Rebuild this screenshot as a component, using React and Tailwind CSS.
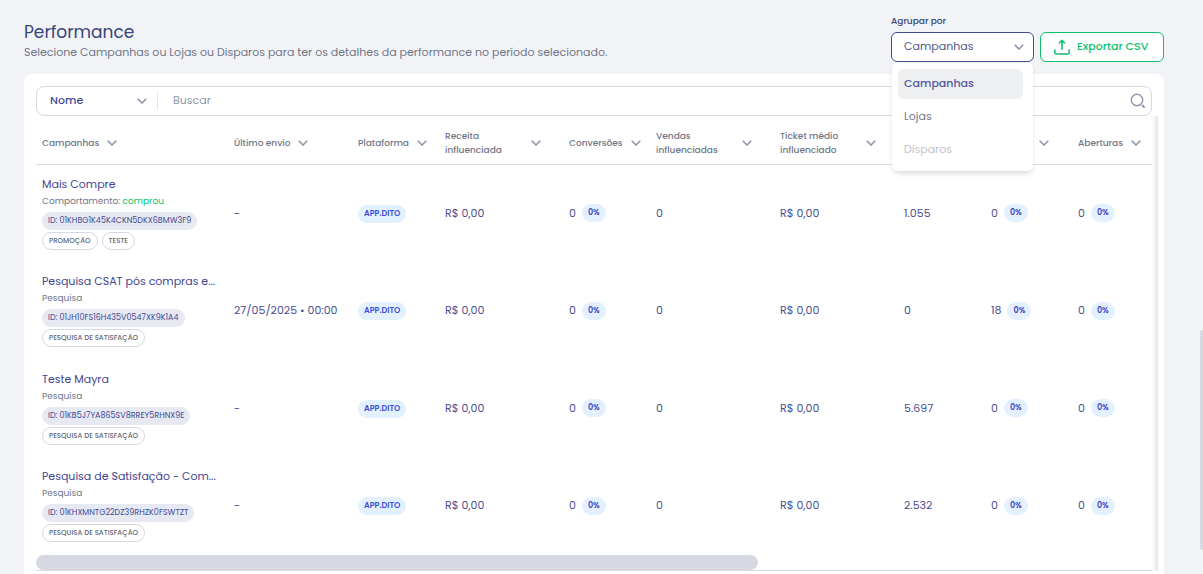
import { useState } from 'react';
import clsx from 'clsx';

const COLUMNS = [
  { key: 'campaign', label: 'Campanhas', width: 'w-[192px]' },
  { key: 'lastSent', label: 'Último envio', width: 'w-[124px]' },
  { key: 'platform', label: 'Plataforma', width: 'w-[87px]' },
  { key: 'revenue', label: 'Receita influenciada', width: 'w-[124px]', wrap: true },
  { key: 'conversions', label: 'Conversões', width: 'w-[87px]' },
  { key: 'sales', label: 'Vendas influenciadas', width: 'w-[124px]', wrap: true },
  { key: 'ticket', label: 'Ticket médio influenciado', width: 'w-[124px]', wrap: true },
  { key: 'sent', hint: 'Envios', width: 'w-[87px]' },
  { key: 'delivered', label: 'Entregas', width: 'w-[87px]' },
  { key: 'opens', label: 'Aberturas' },
];

const CAMPAIGNS = [
  {
    name: 'Mais Compre',
    type: 'Comportamento:',
    event: 'comprou',
    id: '01KHBG1K45K4CKN5DKX6BMW3F9',
    tags: ['PROMOÇÃO', 'TESTE'],
    lastSent: '-',
    sent: '1.055',
    delivered: '0',
  },
  {
    name: 'Pesquisa CSAT pós compras e...',
    type: 'Pesquisa',
    id: '01JH10FS16H435V0547XK9K1A4',
    tags: ['PESQUISA DE SATISFAÇÃO'],
    lastSent: '27/05/2025 • 00:00',
    sent: '0',
    delivered: '18',
  },
  {
    name: 'Teste Mayra',
    type: 'Pesquisa',
    id: '01KB5J7YA865SV8RREY5RHNX9E',
    tags: ['PESQUISA DE SATISFAÇÃO'],
    lastSent: '-',
    sent: '5.697',
    delivered: '0',
  },
  {
    name: 'Pesquisa de Satisfação - Com...',
    type: 'Pesquisa',
    id: '01KHXMNTG22DZ39RHZK0FSWTZT',
    tags: ['PESQUISA DE SATISFAÇÃO'],
    lastSent: '-',
    sent: '2.532',
    delivered: '0',
  },
];

const GROUPS = [
  { value: 'Campanhas' },
  { value: 'Lojas' },
  { value: 'Disparos', disabled: true },
];

function Chevron({ className }) {
  return (
    <svg
      viewBox="0 0 10 6"
      className={clsx('h-[6px] w-[10px] shrink-0 text-[#8e96a9]', className)}
      fill="none"
      stroke="currentColor"
      strokeWidth="1.6"
      aria-hidden="true"
    >
      <path d="M.7.7 5 5 9.3.7" />
    </svg>
  );
}

function UploadIcon() {
  return (
    <svg
      viewBox="0 0 16 16"
      className="size-4 shrink-0"
      fill="none"
      stroke="currentColor"
      strokeWidth="1.5"
      strokeLinecap="round"
      strokeLinejoin="round"
      aria-hidden="true"
    >
      <path d="M8 10.2V1.5M5.3 4 8 1.3 10.7 4" />
      <path d="M.8 11v2.6c0 .8.5 1.3 1.3 1.3h11.8c.8 0 1.3-.5 1.3-1.3V11" />
    </svg>
  );
}

function SearchIcon() {
  return (
    <svg
      viewBox="0 0 16 16"
      className="size-4"
      fill="none"
      stroke="currentColor"
      aria-hidden="true"
    >
      <circle cx="7" cy="7" r="5.7" strokeWidth="1.4" />
      <path d="m12 12 2.6 2.6" strokeWidth="2" />
    </svg>
  );
}

function Rate({ value, rate = '0%' }) {
  return (
    <span className="flex items-center gap-1.5">
      {value}
      <span className="rounded-full bg-[#e3f1ff] px-1.5 text-[8px] leading-[18px] font-semibold text-[#3d42c4]">
        {rate}
      </span>
    </span>
  );
}

function CampaignRow({ campaign }) {
  return (
    <tr className="odd:h-[98px] even:h-[97px] [&>td]:pl-1.5">
      <td className="pb-0.5">
        <div className="flex flex-col items-start whitespace-nowrap">
          <a href="#campanha" className="text-[11px] leading-[18px] text-[#3f4490]">
            {campaign.name}
          </a>
          <span className="text-[9px] leading-4 text-[#6f7787]">
            {campaign.type}
            {campaign.event && <span className="text-[#0fbf6b]"> {campaign.event}</span>}
          </span>
          <span className="mt-[3px] rounded-full bg-[#e6e9f1] px-1.5 text-[8px] leading-[18px] text-[#454a94]">
            ID: {campaign.id}
          </span>
          <div className="mt-0.5 flex gap-1">
            {campaign.tags.map((tag) => (
              <span
                key={tag}
                className="rounded-full border border-[#d6d9e2] px-1.5 text-[7px] leading-4 font-medium text-[#5f6779]"
              >
                {tag}
              </span>
            ))}
          </div>
        </div>
      </td>
      <td>{campaign.lastSent}</td>
      <td>
        <span className="inline-block rounded-full bg-[#e3f1ff] px-1.5 text-[8px] leading-[18px] font-semibold text-[#3d4fd6]">
          APP.DITO
        </span>
      </td>
      <td>R$ 0,00</td>
      <td>
        <Rate value="0" />
      </td>
      <td>0</td>
      <td>R$ 0,00</td>
      <td>{campaign.sent}</td>
      <td>
        <Rate value={campaign.delivered} />
      </td>
      <td>
        <Rate value="0" />
      </td>
    </tr>
  );
}

function GroupSelect() {
  const [group, setGroup] = useState('Campanhas');

  return (
    <div className="w-[143px]">
      <label htmlFor="group" className="block text-[9px] leading-[22px] font-medium text-[#3b4677]">
        Agrupar por
      </label>
      <div className="relative">
        <select
          id="group"
          value={group}
          onChange={(e) => setGroup(e.target.value)}
          className="block h-[30px] w-full appearance-none rounded-md border border-[#454a94] bg-white pb-0.5 pl-3 text-[11px] text-[#4f5a86] outline-none"
        >
          {GROUPS.map((g) => (
            <option key={g.value} disabled={g.disabled}>
              {g.value}
            </option>
          ))}
        </select>
        <Chevron className="pointer-events-none absolute top-3 right-2.5" />
        <ul className="absolute inset-x-px top-full z-10 mt-px rounded-md bg-white px-1.5 pt-1.5 pb-[3px] shadow-md">
          {GROUPS.map((g) => (
            <li key={g.value} className="mb-[3px] pr-1">
              <button
                type="button"
                disabled={g.disabled}
                onClick={() => setGroup(g.value)}
                className={clsx(
                  'h-[30px] w-full rounded-md px-1.5 pb-0.5 text-left text-[11px]',
                  g.value === group && 'bg-[#eeeff1] font-medium text-[#5358a3]',
                  g.value !== group && !g.disabled && 'text-[#6f7787]',
                  g.disabled && 'text-[#c0c4d0]'
                )}
              >
                {g.value}
              </button>
            </li>
          ))}
        </ul>
      </div>
    </div>
  );
}

function SearchBar() {
  return (
    <div className="flex h-[30px] items-center rounded-lg border border-[#d6d9e2] pr-[5px]">
      <div className="relative w-[121px] border-r border-[#e6e8ee]">
        <select
          aria-label="Campo da busca"
          className="block h-[18px] w-full appearance-none pb-0.5 pl-[13px] text-[11px] font-medium text-[#454a94] outline-none"
        >
          <option>Nome</option>
        </select>
        <Chevron className="pointer-events-none absolute top-1.5 right-2.5" />
      </div>
      <input
        type="search"
        aria-label="Buscar"
        placeholder="Buscar"
        className="min-w-0 flex-1 px-[15px] pb-0.5 text-[11px] outline-none placeholder:text-[#8e96a9]"
      />
      <button type="button" aria-label="Pesquisar" className="text-[#8e96a9]">
        <SearchIcon />
      </button>
    </div>
  );
}

export default function App() {
  return (
    <div className="flex min-h-screen flex-col bg-[#f2f3f7] pt-2.5 pr-[39px] pl-6 font-['Poppins','Inter',sans-serif]">
      <header className="flex items-end justify-between">
        <div>
          <h1 className="text-[17px] leading-5 text-[#36457a]">Performance</h1>
          <p className="text-[11px] leading-5 text-[#6f7787]">
            Selecione Campanhas ou Lojas ou Disparos para ter os detalhes da performance no período selecionado.
          </p>
        </div>
        <div className="flex items-end gap-1.5">
          <GroupSelect />
          <button
            type="button"
            className="flex h-[30px] w-[124px] items-center gap-[7px] rounded-md border border-[#0fbf6b] bg-white pl-[13px] text-[11px] font-medium whitespace-nowrap text-[#0fbf6b]"
          >
            <UploadIcon />
            <span className="pb-0.5">Exportar CSV</span>
          </button>
        </div>
      </header>

      <main className="mt-3 flex-1 rounded-t-lg bg-white px-3 pt-3">
        <SearchBar />
        <div className="-mr-1.5 flex">
          <div className="min-w-0 flex-1 border-b border-[#d6d9e2]">
            <table className="w-full table-fixed border-collapse text-left text-[11px] text-[#4b5090]">
              <thead>
                <tr className="h-12 border-b border-[#d6d9e2]">
                  {COLUMNS.map((col) => (
                    <th
                      key={col.key}
                      scope="col"
                      className={clsx('pt-[7px] pl-1.5 text-[9px] leading-[14px] font-medium text-[#6f7787]', col.width)}
                    >
                      <button
                        type="button"
                        aria-label={col.hint}
                        className={clsx(
                          'flex items-center gap-2 text-left',
                          col.wrap ? 'w-full justify-between pr-[22px]' : 'whitespace-nowrap'
                        )}
                      >
                        <span className={col.wrap ? 'w-16' : undefined}>{col.label}</span>
                        <Chevron />
                      </button>
                    </th>
                  ))}
                </tr>
              </thead>
              <tbody>
                {CAMPAIGNS.map((campaign) => (
                  <CampaignRow key={campaign.id} campaign={campaign} />
                ))}
              </tbody>
            </table>
            {/* horizontal scroll thumb */}
            <div className="mt-px h-[15px] w-[64.7%] rounded-full bg-[#d6d9e2]" />
          </div>
          <div className="w-1.5 bg-linear-to-r from-white to-[#e4e4e4]" />
        </div>
      </main>

      {/* page scroll thumb */}
      <div className="fixed top-[330px] right-0 h-[220px] w-[3px] rounded-l-sm bg-[#d6d9e2]" />
    </div>
  );
}
